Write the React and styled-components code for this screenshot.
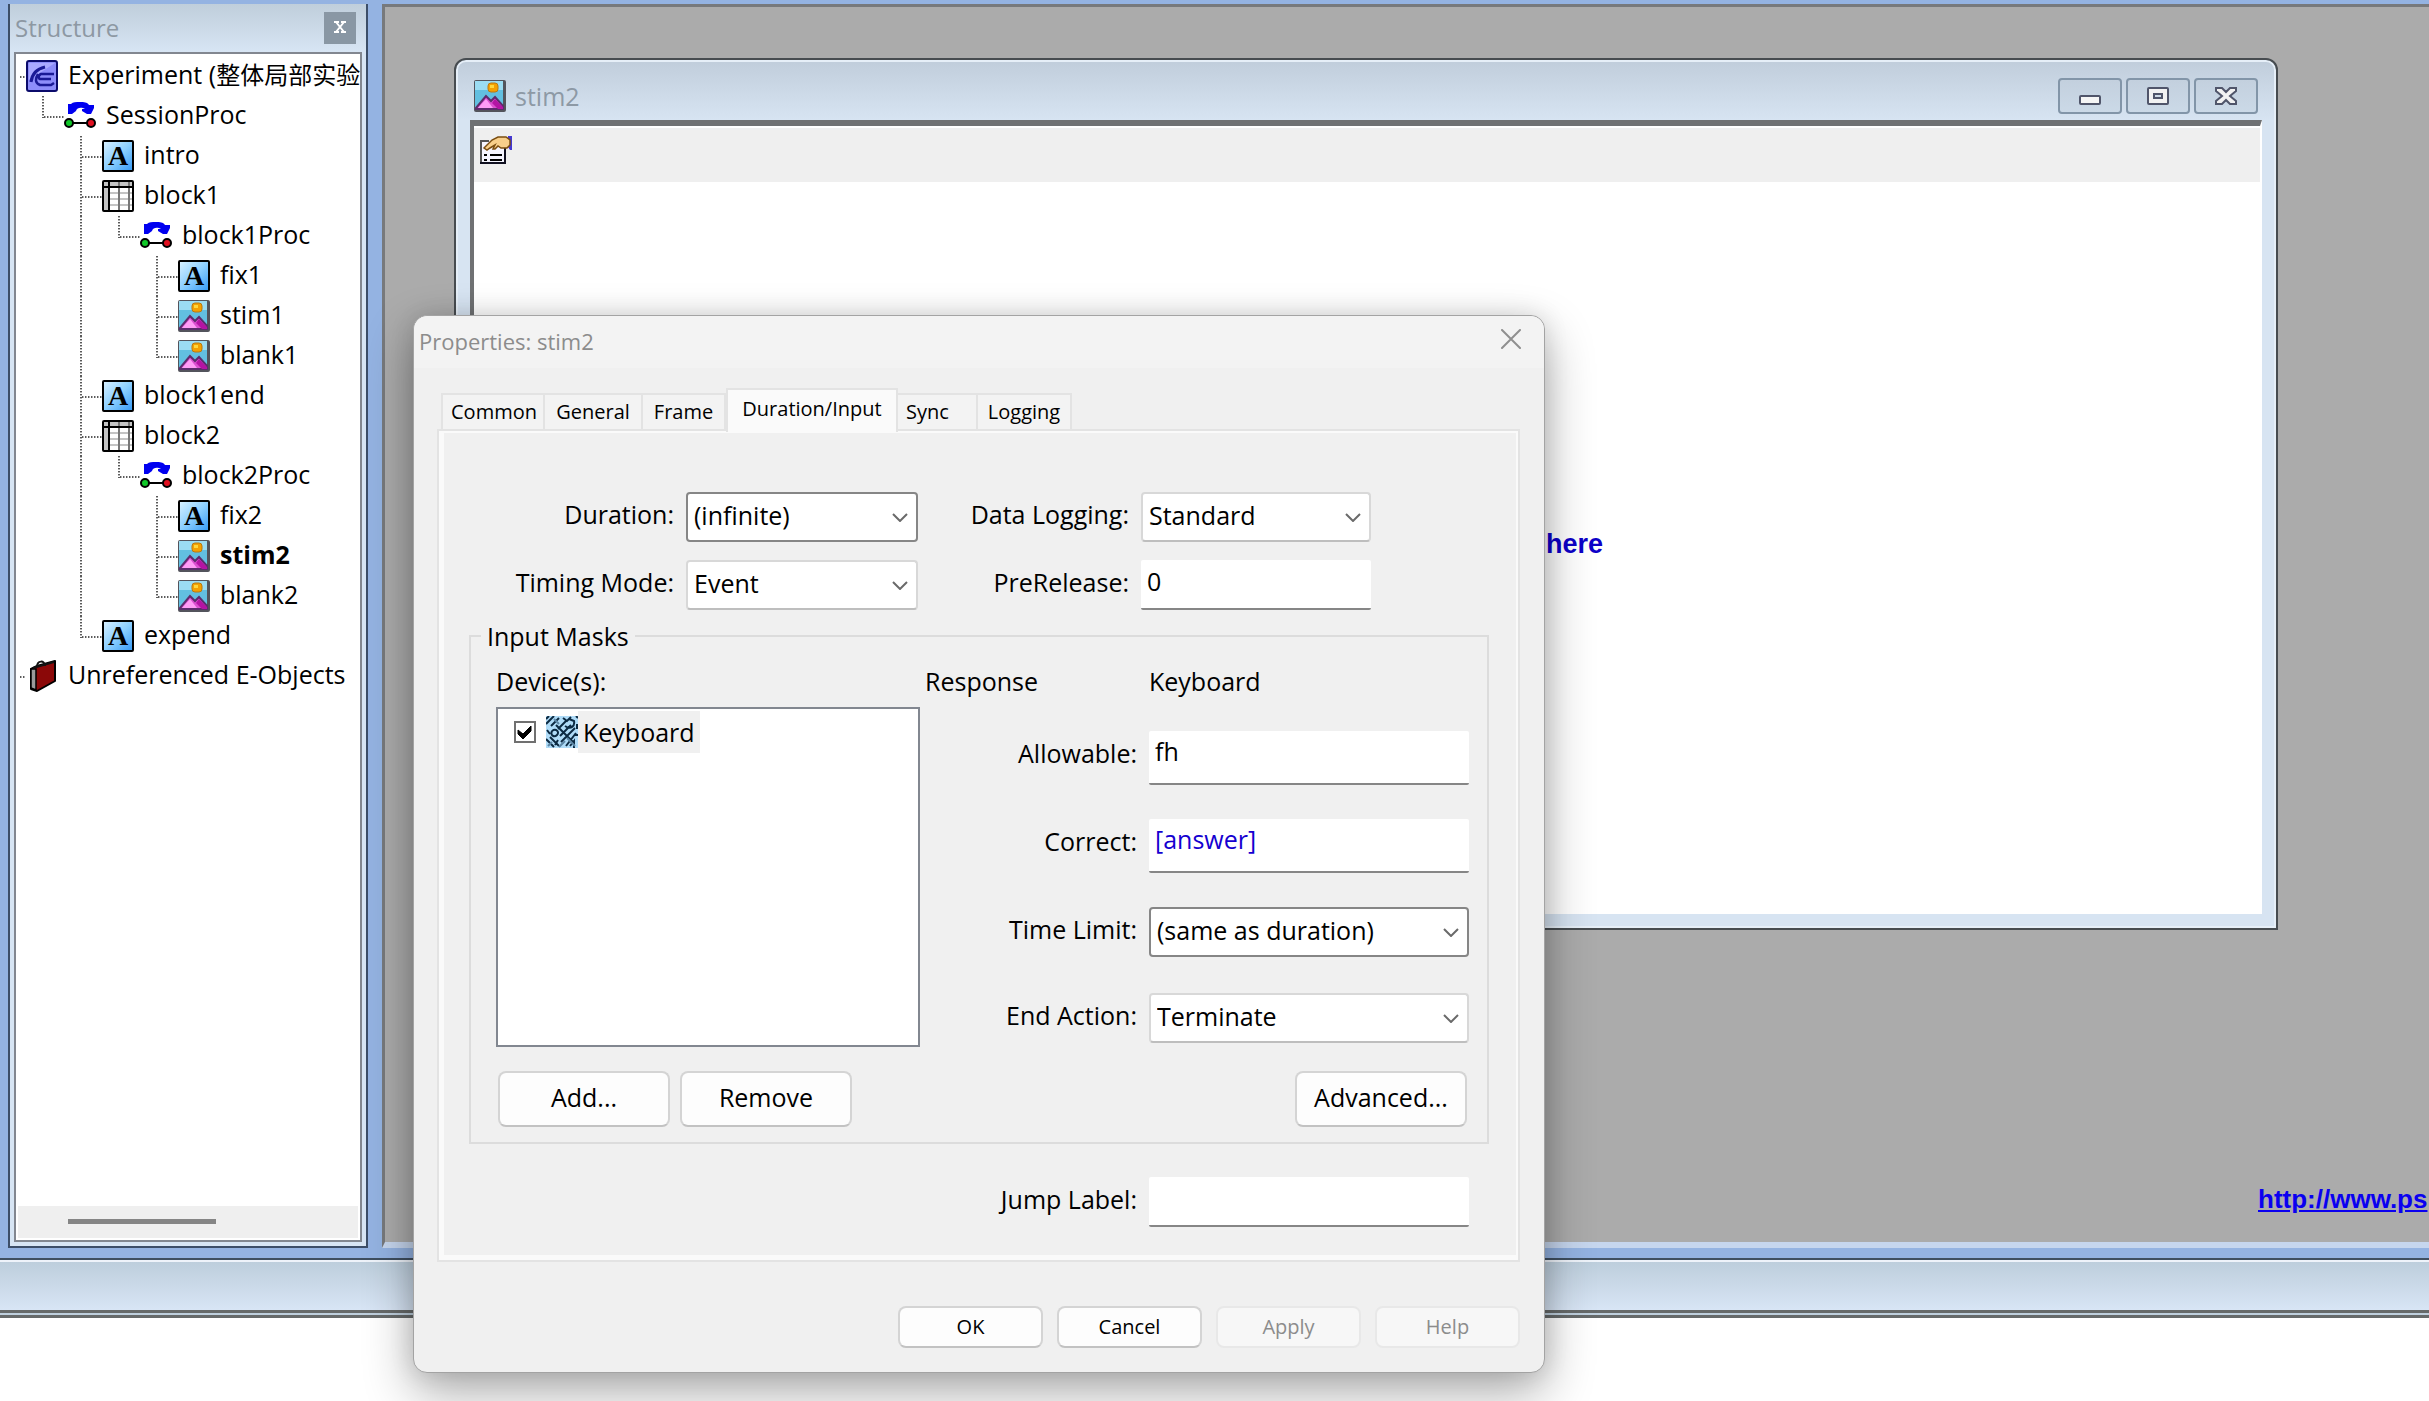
import React from "react";
import styled, { createGlobalStyle, css } from "styled-components";

const UI_FONT = '"Open Sans", "Noto Sans", "Noto Sans CJK SC", sans-serif';
const ARIAL = '"Liberation Sans", Arial, sans-serif';

const GlobalStyle = createGlobalStyle`
  *, *::before, *::after { box-sizing: border-box; }
  body {
    margin: 0;
    background: #fff;
    color: #000;
    font-family: ${UI_FONT};
    font-size: 25px;
    line-height: 34px;
  }
  button, input, select { font: inherit; color: inherit; margin: 0; }
`;

/* ---------- application shell ---------- */

const Shell = styled.div`
  position: relative;
  display: flex;
  flex-direction: column;
  height: 100vh;
  overflow: hidden;
`;

const Workspace = styled.div`
  flex: 1;
  min-height: 0;
  display: flex;
  gap: 14px;
  padding: 4px 0 10px 8px;
  background: #94b3e2;
`;

const StatusBar = styled.div`
  height: 60px;
  border-top: 2px solid #3f4f60;
  border-bottom: 8px double #666a6a;
  box-shadow: inset 0 2px #eef3fa;
  background: linear-gradient(#bccddb, #d8e5f5);
`;

const BlankFooter = styled.div`
  height: 83px;
`;

/* ---------- structure panel ---------- */

const Panel = styled.aside`
  flex: none;
  display: flex;
  flex-direction: column;
  width: 360px;
  padding: 0 4px 4px;
  border: 2px solid #3c4e68;
  border-top: 0;
  background: linear-gradient(#bfcedb, #d7e5f4 48px);
`;

const PanelHeader = styled.header`
  display: flex;
  align-items: center;
  justify-content: space-between;
  height: 48px;
  padding: 0 6px 0 1px;
`;

const PanelTitle = styled.h2`
  margin: 0;
  font-size: 24px;
  font-weight: 400;
  color: #8d98a3;
`;

const PanelClose = styled.button`
  display: grid;
  place-items: center;
  width: 32px;
  height: 32px;
  padding: 0 0 2px;
  border: 0;
  background: #8997a4;
`;

const TreeBox = styled.div`
  flex: 1;
  display: flex;
  flex-direction: column;
  justify-content: space-between;
  padding: 2px;
  border: 2px solid #828790;
  background: #fff;
  overflow: hidden;
`;

const TreeList = styled.ul`
  margin: 0;
  padding: 0;
  list-style: none;
`;

const TreeRow = styled.li`
  display: flex;
  align-items: center;
  height: 40px;
  white-space: nowrap;
  font-weight: ${(p) => (p.$current ? 700 : 400)};
`;

const TreeText = styled.span`
  padding: 0 0 4px 10px;
`;

const FileName = styled.span`
  font-size: 24px;
`;

const DOTS = "#5a5a5a 0 1px, #b4b4b4 1px 2px, transparent 2px 3px";
const dotsDown = `repeating-linear-gradient(${DOTS})`;
const dotsAcross = `repeating-linear-gradient(90deg, ${DOTS})`;

const Guide = styled.span`
  flex: none;
  width: 38px;
  height: 40px;
  background-repeat: no-repeat;
  ${(p) =>
    p.$kind === "root" &&
    css`
      width: 8px;
      background-image: ${dotsAcross};
      background-position: 2px 20px;
      background-size: 6px 2px;
    `}
  ${(p) =>
    p.$kind === "indent" &&
    css`
      width: 8px;
    `}
  ${(p) =>
    p.$kind === "line" &&
    css`
      background-image: ${dotsDown};
      background-position: 16px 0;
      background-size: 2px 40px;
    `}
  ${(p) =>
    (p.$kind === "tee" || p.$kind === "corner") &&
    css`
      background-image: ${dotsDown}, ${dotsAcross};
      background-position: 16px 0, 18px 20px;
      background-size: 2px ${p.$kind === "tee" ? 40 : 22}px, 20px 2px;
    `}
`;

const ScrollTrack = styled.div`
  height: 32px;
  padding: 13px 50px;
  background: #efefef;
`;

const ScrollThumb = styled.div`
  width: 148px;
  height: 5px;
  background: #858585;
`;

/* ---------- MDI area ---------- */

const MdiArea = styled.main`
  position: relative;
  flex: 1;
  min-width: 0;
  display: flex;
  flex-direction: column;
  justify-content: flex-end;
  align-items: flex-end;
  padding-bottom: 28px;
  border-top: 3px solid #77797c;
  border-left: 3px solid #77797c;
  border-bottom: 6px solid #c6d6ee;
  background: #ababab;
`;

const SiteLink = styled.a`
  width: 171px;
  white-space: nowrap;
  font: 700 26px/30px ${ARIAL};
  color: #0a00f0;
`;

const ChildWindow = styled.section`
  position: absolute;
  top: 51px;
  left: 69px;
  right: 151px;
  height: 872px;
  display: flex;
  flex-direction: column;
  padding: 0 14px 14px;
  border: 2px solid #474c50;
  border-radius: 12px 12px 0 0;
  box-shadow: inset 0 0 0 2px #e6eff8;
  background: linear-gradient(#c0cddb, #d7e4f2 60px);
`;

const ChildHeader = styled.header`
  display: flex;
  align-items: center;
  gap: 9px;
  height: 60px;
  padding: 12px 4px 0 4px;
`;

const ChildTitle = styled.h2`
  flex: 1;
  margin: 0;
  font-size: 25px;
  font-weight: 400;
  color: #8d99a5;
`;

const WindowButtons = styled.div`
  display: flex;
  gap: 4px;
`;

const WindowButton = styled.button`
  display: grid;
  place-items: center;
  width: 64px;
  height: 36px;
  padding: 0;
  border: 2px solid #8295a8;
  border-radius: 4px;
  background: linear-gradient(#c3d0de, #cbd9e7);
`;

const ChildBody = styled.div`
  flex: 1;
  display: flex;
  flex-direction: column;
  border: 2px solid #fff;
  border-top: 6px solid #6f7173;
  border-left: 4px solid #6f7173;
  background: #fff;
`;

const Toolbar = styled.div`
  height: 56px;
  padding: 8px 6px;
  border-top: 2px solid #fff;
  background: #efefef;
`;

const ToolButton = styled.button`
  display: block;
  padding: 0;
  border: 0;
  background: none;
`;

const ImageCaption = styled.p`
  margin: 347px 0 0 1072px;
  font: 700 27px/30px ${ARIAL};
  color: #0d00c8;
`;

/* ---------- properties dialog ---------- */

const Dialog = styled.section`
  position: absolute;
  top: 315px;
  left: 413px;
  width: 1132px;
  border: 1px solid #a3a3a3;
  border-radius: 14px;
  background: #f0f0f0;
  box-shadow: 0 20px 50px rgba(0, 0, 0, 0.32), 0 0 24px rgba(0, 0, 0, 0.12);
`;

const DialogHeader = styled.header`
  display: flex;
  align-items: center;
  justify-content: space-between;
  height: 52px;
  padding: 0 23px 6px 5px;
  border-radius: 14px 14px 0 0;
  background: #f3f3f3;
`;

const DialogTitle = styled.h1`
  margin: 0;
  padding-top: 4px;
  font-size: 22px;
  font-weight: 400;
  line-height: 30px;
  color: #8c8c8c;
`;

const DialogClose = styled.button`
  display: grid;
  padding: 0;
  border: 0;
  background: none;
`;

const DialogContent = styled.div`
  padding: 20px 24px 24px 23px;
`;

const Tabs = styled.div`
  display: flex;
  align-items: flex-end;
  height: 41px;
  padding-left: 4px;
`;

const Tab = styled.button`
  width: ${(p) => p.$width}px;
  height: 36px;
  padding: 0 8px;
  border: 2px solid #e3e3e3;
  border-bottom: 0;
  border-left-width: ${(p) => (p.$first || p.$active ? 2 : 0)}px;
  background: #f3f3f3;
  font-size: 20px;
  line-height: 32px;
  text-align: ${(p) => (p.$start ? "left" : "center")};
  ${(p) =>
    p.$active &&
    css`
      position: relative;
      height: 44px;
      margin-bottom: -3px;
      padding-bottom: 4px;
      background: #fafafa;
    `}
`;

const TabPanel = styled.div`
  padding: 61px 0 33px;
  border: 2px solid #e3e3e3;
  box-shadow: inset 5px 2px #fafafa, inset -2px -5px #fafafa;
`;

const SettingsGrid = styled.div`
  display: grid;
  grid-template-columns: 235px 232px 199px 230px;
  column-gap: 12px;
  row-gap: 18px;
`;

const FieldLabel = styled.label`
  height: 50px;
  padding-bottom: 6px;
  line-height: 44px;
  text-align: right;
  white-space: nowrap;
`;

const TextField = styled.input`
  width: 100%;
  height: ${(p) => p.$height || 50}px;
  padding: 0 6px ${(p) => (p.$height ? 12 : 6)}px;
  border: 0;
  border-bottom: 2px solid #868686;
  border-radius: 2px;
  outline: 0;
  background: #fff;
  color: ${(p) => (p.$reference ? "#1500d0" : "#000")};
`;

const SelectWrap = styled.div`
  display: grid;
  grid-template-columns: 1fr 26px;
  align-items: center;
  height: 50px;
`;

const SelectBox = styled.select`
  grid-area: 1 / 1 / 2 / 3;
  appearance: none;
  width: 100%;
  height: 50px;
  padding: 0 26px 5px 6px;
  border: 2px solid ${(p) => (p.$strong ? "#868686" : "#d8d8d8")};
  border-bottom-color: ${(p) => (p.$strong ? "#868686" : "#bebebe")};
  border-radius: 4px;
  outline: 0;
  background: #fff;
`;

const Chevron = styled.svg`
  grid-area: 1 / 2;
  width: 16px;
  height: 9px;
  pointer-events: none;
`;

const InputMasks = styled.fieldset`
  display: grid;
  grid-template-columns: 424px 1fr;
  column-gap: 5px;
  min-width: 0;
  margin: 9px 29px 0 30px;
  padding: 11px 18px 15px 25px;
  border: 2px solid #dcdcdc;
`;

const Legend = styled.legend`
  margin-left: -15px;
  padding: 0 6px;
`;

const MaskColumn = styled.div`
  display: flex;
  flex-direction: column;
`;

const DeviceList = styled.div`
  height: 340px;
  margin: 9px 0 24px;
  padding: 2px 16px;
  border: 2px solid #828790;
  background: #fff;
`;

const DeviceItem = styled.label`
  display: flex;
  align-items: center;
  height: 42px;
`;

const CheckHolder = styled.span`
  display: grid;
  margin-right: 10px;
`;

const CheckBox = styled.input`
  grid-area: 1 / 1;
  appearance: none;
  width: 22px;
  height: 22px;
  border: 2px solid #707070;
  background: #fff;
`;

const CheckMark = styled.svg`
  grid-area: 1 / 1;
  width: 22px;
  height: 22px;
  pointer-events: none;
`;

const DeviceName = styled.span`
  padding: 0 5px;
  line-height: 42px;
  background: #f0f0f0;
`;

const ButtonRow = styled.div`
  display: flex;
  gap: 10px;
  padding: 0 2px;
  justify-content: ${(p) => (p.$end ? "flex-end" : "flex-start")};
`;

const PushButton = styled.button`
  width: 172px;
  height: 56px;
  padding: 0 0 4px;
  border: 2px solid #d4d4d4;
  border-bottom-color: #c2c2c2;
  border-radius: 8px;
  background: #fdfdfd;
`;

const ResponseGrid = styled.div`
  display: grid;
  grid-template-columns: 212px 320px;
  column-gap: 12px;
`;

const ResponseFields = styled(ResponseGrid)`
  grid-template-rows: 54px 54px 52px 50px;
  row-gap: 34px;
  margin: 33px 0 28px;
`;

const JumpRow = styled(ResponseGrid)`
  justify-content: end;
  margin: 33px 49px 0 0;
`;

const DialogActions = styled.footer`
  display: flex;
  justify-content: flex-end;
  gap: 14px;
  margin-top: 44px;
`;

const ActionButton = styled(PushButton)`
  width: 145px;
  height: 42px;
  padding: 0;
  font-size: 20px;
  line-height: 36px;
  &:disabled {
    border-color: #e8e8e8;
    background: #f7f7f7;
    color: #8c8c8c;
  }
`;

/* ---------- icons ---------- */

const IconSvg = styled.svg`
  display: block;
  flex: none;
  width: 32px;
  height: 32px;
`;

function ExperimentIcon() {
  return (
    <IconSvg viewBox="0 0 32 32" aria-hidden="true">
      <rect x="1" y="1" width="30" height="30" rx="2" fill="#8d8dfa" stroke="#0b0b6b" strokeWidth="2" />
      <path d="M3 3h26L3 20z" fill="#a9a9ff" />
      <path d="M19 7C10 9 6 14 5 22" fill="none" stroke="#1a1a96" strokeWidth="3" />
      <path d="M28 14H15c-3 1-3 5 0 5h10M12 14c-3 5-3 9 2 11h11l3-2" fill="none" stroke="#1a1a96" strokeWidth="2.5" />
    </IconSvg>
  );
}

function ProcedureIcon() {
  return (
    <IconSvg viewBox="0 0 32 32" aria-hidden="true">
      <path d="M4 14V4h3c2-2 5-2 9-2s7 0 9 3h5v3l-3 6h-4l-5-3v-2h3c-3-2-8-2-9 2l-4 3z" fill="#0000f0" />
      <path d="M6 23h21" stroke="#000" strokeWidth="2" />
      <circle cx="5" cy="23" r="4" fill="#10c828" stroke="#000" strokeWidth="2" />
      <circle cx="27" cy="23" r="4" fill="#e01020" stroke="#000" strokeWidth="2" />
    </IconSvg>
  );
}

const LetterTile = styled.span`
  display: grid;
  place-items: center;
  flex: none;
  width: 32px;
  height: 32px;
  border: 2px solid #000;
  border-radius: 2px;
  background: linear-gradient(135deg, #d6f0ff, #8ccfff 50%, #3a9cf5);
  font: 700 28px/28px "Liberation Serif", "Times New Roman", serif;
`;

function TextIcon() {
  return <LetterTile aria-hidden="true">A</LetterTile>;
}

function ListIcon() {
  return (
    <IconSvg viewBox="0 0 32 32" aria-hidden="true">
      <rect x="1" y="1" width="30" height="30" rx="1" fill="#fff" stroke="#000" strokeWidth="2" />
      <path d="M2 2h28v4H2zM2 8h4v22H2z" fill="#c4c4c4" />
      <path d="M2 13h28M2 19h28M2 25h28" stroke="#c4c4c4" strokeWidth="2" />
      <path d="M17 2v28M27 2v28" stroke="#777" strokeWidth="2" />
      <path d="M2 7h28M7 2v28" stroke="#000" strokeWidth="2" />
    </IconSvg>
  );
}

function ImageIcon() {
  return (
    <IconSvg viewBox="0 0 32 32" aria-hidden="true">
      <rect width="32" height="32" rx="2" fill="#53545c" />
      <rect x="1" y="1" width="28" height="28" fill="#62bfe0" />
      <path d="M1 1h28v9H1z" fill="#9bdcf2" />
      <rect x="14" y="3" width="10" height="9" rx="3" fill="#f5a000" stroke="#b87812" />
      <rect x="16" y="5" width="4" height="3" fill="#ffd63c" />
      <path d="M2 28L12 16l5 5 4-4 8 9v3H2z" fill="#dc50d0" stroke="#5d2c6c" strokeWidth="2" />
      <path d="M4 28l8-9 7 9z" fill="#ff9cf5" />
      <path d="M21 19l8 8v2h-5l-6-6z" fill="#b414a4" />
    </IconSvg>
  );
}

function BookIcon() {
  return (
    <IconSvg viewBox="0 0 32 32" aria-hidden="true">
      <path d="M5 9l6-3L29 1v20L11 31l-6-2z" fill="#8b0808" stroke="#000" strokeWidth="2" strokeLinejoin="round" />
      <path d="M5 9h5v21l-5-2z" fill="#9a9a9a" stroke="#000" strokeWidth="1.5" />
      <path d="M7 8L28 2" stroke="#111" strokeWidth="2" />
      <path d="M11 7c0-7 8-7 8-1" fill="none" stroke="#111" strokeWidth="2" />
    </IconSvg>
  );
}

function PropertiesIcon() {
  return (
    <IconSvg viewBox="0 0 32 32" aria-hidden="true">
      <path d="M1 5h24v22H1z" fill="#f5f5ff" />
      <path d="M1 28V5h8" fill="none" stroke="#555" strokeWidth="2" />
      <path d="M0 27h25V12" fill="none" stroke="#101020" strokeWidth="2" />
      <path d="M4 19h3M10 19h12M4 24h3M10 24h12" stroke="#000" strokeWidth="2" />
      <path d="M28 0h4v14h-2l-2-3z" fill="#4438d0" />
      <path d="M4 12l8-8 6-3h8l4 3v5l-3 3h-6l-3-2-3 3h-2l2-4-5 3-3 2z" fill="#f8cf8a" stroke="#7a4d10" strokeWidth="1.5" />
    </IconSvg>
  );
}

function KeyboardIcon() {
  return (
    <IconSvg viewBox="0 0 32 32" aria-hidden="true">
      <rect width="32" height="32" fill="#b0dcf8" />
      <path
        d="M0 8l8-8M0 3l3-3M5 10l8-8M1 14l3 4M10 9l18 18M6 15c4-3 8 1 5 4s-7 0-5-4M12 13l8-8M17 2l4 3 4-4M19 10c6 4 10 0 9-5l-5-2M0 23l8 8M4 21l9 9M14 20l7-7M15 26l14-14M20 30l10-13M24 30l4-5v7M31 8v5M30 0l2 2M17 17l8-8M12 24l-3 5M28 19h4"
        fill="none"
        stroke="#0c2a42"
        strokeWidth="2"
      />
      <path d="M2 30l4-4M8 3l5 5M21 22l8 8M13 31l6-6" fill="none" stroke="#5d87a6" strokeWidth="2" />
    </IconSvg>
  );
}

function MinimizeGlyph() {
  return (
    <svg width="24" height="22" viewBox="0 0 24 22" aria-hidden="true">
      <rect x="2" y="11" width="20" height="8" rx="1" fill="#f5f5f5" stroke="#50556a" strokeWidth="2" />
    </svg>
  );
}

function RestoreGlyph() {
  return (
    <svg width="24" height="22" viewBox="0 0 24 22" aria-hidden="true">
      <rect x="2" y="3" width="20" height="16" rx="1" fill="#f2f2f2" stroke="#50556a" strokeWidth="2" />
      <rect x="8" y="9" width="8" height="4" fill="#cfdae6" stroke="#50556a" strokeWidth="2" />
    </svg>
  );
}

function CloseGlyph() {
  return (
    <svg width="24" height="22" viewBox="0 0 24 22" aria-hidden="true">
      <path d="M2 3h6l4 4 4-4h6v3l-6 5 6 5v3h-6l-4-4-4 4H2v-3l6-5-6-5z" fill="#f2f2f2" stroke="#50556a" strokeWidth="2" />
    </svg>
  );
}

/* ---------- data ---------- */

const ICONS = {
  experiment: ExperimentIcon,
  procedure: ProcedureIcon,
  text: TextIcon,
  list: ListIcon,
  image: ImageIcon,
  book: BookIcon,
};

const TREE = [
  { name: "Experiment (", file: "整体局部实验", icon: "experiment", guides: ["root"] },
  { name: "SessionProc", icon: "procedure", guides: ["indent", "corner"] },
  { name: "intro", icon: "text", guides: ["indent", "blank", "tee"] },
  { name: "block1", icon: "list", guides: ["indent", "blank", "tee"] },
  { name: "block1Proc", icon: "procedure", guides: ["indent", "blank", "line", "corner"] },
  { name: "fix1", icon: "text", guides: ["indent", "blank", "line", "blank", "tee"] },
  { name: "stim1", icon: "image", guides: ["indent", "blank", "line", "blank", "tee"] },
  { name: "blank1", icon: "image", guides: ["indent", "blank", "line", "blank", "corner"] },
  { name: "block1end", icon: "text", guides: ["indent", "blank", "tee"] },
  { name: "block2", icon: "list", guides: ["indent", "blank", "tee"] },
  { name: "block2Proc", icon: "procedure", guides: ["indent", "blank", "line", "corner"] },
  { name: "fix2", icon: "text", guides: ["indent", "blank", "line", "blank", "tee"] },
  { name: "stim2", icon: "image", guides: ["indent", "blank", "line", "blank", "tee"], current: true },
  { name: "blank2", icon: "image", guides: ["indent", "blank", "line", "blank", "corner"] },
  { name: "expend", icon: "text", guides: ["indent", "blank", "corner"] },
  { name: "Unreferenced E-Objects", icon: "book", guides: ["root"] },
];

const TABS = [
  { name: "Common", width: 104 },
  { name: "General", width: 98 },
  { name: "Frame", width: 83 },
  { name: "Duration/Input", width: 172, active: true },
  { name: "Sync", width: 80, start: true },
  { name: "Logging", width: 94 },
];

/* ---------- composed parts ---------- */

function StructurePanel() {
  return (
    <Panel>
      <PanelHeader>
        <PanelTitle>Structure</PanelTitle>
        <PanelClose aria-label="Close structure panel">
          <svg width="12" height="12" viewBox="0 0 12 12" aria-hidden="true">
            <path d="M2 1l8 10M10 1L2 11" stroke="#fff" strokeWidth="2" />
            <path d="M0 1h5M7 1h5M0 11h5M7 11h5" stroke="#fff" strokeWidth="2" />
          </svg>
        </PanelClose>
      </PanelHeader>
      <TreeBox>
        <TreeList>
          {TREE.map((node) => {
            const Icon = ICONS[node.icon];
            return (
              <TreeRow key={node.name} $current={node.current}>
                {node.guides.map((kind, i) => (
                  <Guide key={i} $kind={kind} />
                ))}
                <Icon />
                <TreeText>
                  {node.name}
                  {node.file && <FileName>{node.file}</FileName>}
                </TreeText>
              </TreeRow>
            );
          })}
        </TreeList>
        <ScrollTrack>
          <ScrollThumb />
        </ScrollTrack>
      </TreeBox>
    </Panel>
  );
}

function Select({ id, value, strong }) {
  return (
    <SelectWrap>
      <SelectBox id={id} $strong={strong} defaultValue={value}>
        <option>{value}</option>
      </SelectBox>
      <Chevron viewBox="0 0 16 9" aria-hidden="true">
        <path d="M1 1l7 7 7-7" fill="none" stroke="#6a6a6a" strokeWidth="2" />
      </Chevron>
    </SelectWrap>
  );
}

function StimulusWindow() {
  return (
    <ChildWindow>
      <ChildHeader>
        <ImageIcon />
        <ChildTitle>stim2</ChildTitle>
        <WindowButtons>
          <WindowButton aria-label="Minimize"><MinimizeGlyph /></WindowButton>
          <WindowButton aria-label="Restore"><RestoreGlyph /></WindowButton>
          <WindowButton aria-label="Close"><CloseGlyph /></WindowButton>
        </WindowButtons>
      </ChildHeader>
      <ChildBody>
        <Toolbar>
          <ToolButton aria-label="Properties"><PropertiesIcon /></ToolButton>
        </Toolbar>
        <ImageCaption>here</ImageCaption>
      </ChildBody>
    </ChildWindow>
  );
}

function PropertiesDialog() {
  return (
    <Dialog role="dialog" aria-labelledby="dialog-title">
      <DialogHeader>
        <DialogTitle id="dialog-title">Properties: stim2</DialogTitle>
        <DialogClose aria-label="Close dialog">
          <svg width="20" height="20" viewBox="0 0 20 20" aria-hidden="true">
            <path d="M1 1l18 18M19 1L1 19" stroke="#8f8f8f" strokeWidth="2" strokeLinecap="round" />
          </svg>
        </DialogClose>
      </DialogHeader>
      <DialogContent>
        <Tabs role="tablist">
          {TABS.map((tab, i) => (
            <Tab
              key={tab.name}
              role="tab"
              aria-selected={Boolean(tab.active)}
              $width={tab.width}
              $active={tab.active}
              $start={tab.start}
              $first={i === 0}
            >
              {tab.name}
            </Tab>
          ))}
        </Tabs>
        <TabPanel role="tabpanel">
          <SettingsGrid>
            <FieldLabel htmlFor="duration">Duration:</FieldLabel>
            <Select id="duration" value="(infinite)" strong />
            <FieldLabel htmlFor="data-logging">Data Logging:</FieldLabel>
            <Select id="data-logging" value="Standard" />
            <FieldLabel htmlFor="timing-mode">Timing Mode:</FieldLabel>
            <Select id="timing-mode" value="Event" />
            <FieldLabel htmlFor="pre-release">PreRelease:</FieldLabel>
            <TextField id="pre-release" defaultValue="0" />
          </SettingsGrid>

          <InputMasks>
            <Legend>Input Masks</Legend>
            <MaskColumn>
              <span>Device(s):</span>
              <DeviceList>
                <DeviceItem>
                  <CheckHolder>
                    <CheckBox type="checkbox" defaultChecked />
                    <CheckMark viewBox="0 0 22 22" aria-hidden="true">
                      <path d="M4 9l5 4 8-8v5l-8 8-5-5z" fill="#000" stroke="#000" />
                    </CheckMark>
                  </CheckHolder>
                  <KeyboardIcon />
                  <DeviceName>Keyboard</DeviceName>
                </DeviceItem>
              </DeviceList>
              <ButtonRow>
                <PushButton>Add...</PushButton>
                <PushButton>Remove</PushButton>
              </ButtonRow>
            </MaskColumn>
            <MaskColumn>
              <ResponseGrid>
                <span>Response</span>
                <span>Keyboard</span>
              </ResponseGrid>
              <ResponseFields>
                <FieldLabel htmlFor="allowable">Allowable:</FieldLabel>
                <TextField id="allowable" $height={54} defaultValue="fh" />
                <FieldLabel htmlFor="correct">Correct:</FieldLabel>
                <TextField id="correct" $height={54} $reference defaultValue="[answer]" />
                <FieldLabel htmlFor="time-limit">Time Limit:</FieldLabel>
                <Select id="time-limit" value="(same as duration)" strong />
                <FieldLabel htmlFor="end-action">End Action:</FieldLabel>
                <Select id="end-action" value="Terminate" />
              </ResponseFields>
              <ButtonRow $end>
                <PushButton>Advanced...</PushButton>
              </ButtonRow>
            </MaskColumn>
          </InputMasks>

          <JumpRow>
            <FieldLabel htmlFor="jump-label">Jump Label:</FieldLabel>
            <TextField id="jump-label" />
          </JumpRow>
        </TabPanel>
        <DialogActions>
          <ActionButton>OK</ActionButton>
          <ActionButton>Cancel</ActionButton>
          <ActionButton disabled>Apply</ActionButton>
          <ActionButton disabled>Help</ActionButton>
        </DialogActions>
      </DialogContent>
    </Dialog>
  );
}

export default function App() {
  return (
    <>
      <GlobalStyle />
      <Shell>
        <Workspace>
          <StructurePanel />
          <MdiArea>
            <StimulusWindow />
            <SiteLink href="http://www.ps">http://www.ps</SiteLink>
          </MdiArea>
        </Workspace>
        <StatusBar />
        <BlankFooter />
        <PropertiesDialog />
      </Shell>
    </>
  );
}
